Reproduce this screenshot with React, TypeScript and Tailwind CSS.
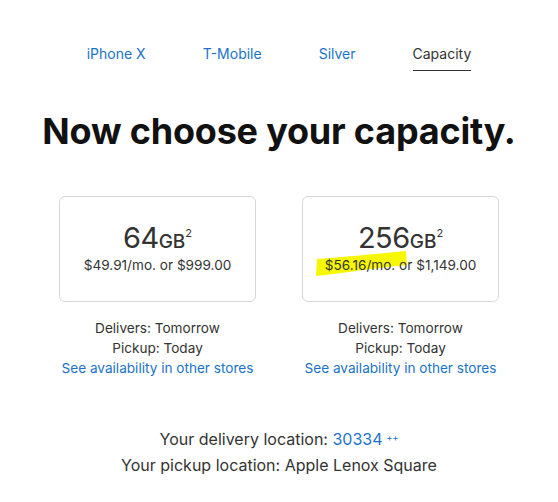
const NAV = [
  { label: "iPhone X", active: false },
  { label: "T-Mobile", active: false },
  { label: "Silver", active: false },
  { label: "Capacity", active: true },
];

function CapacityCard({
  size,
  monthly,
  full,
  marked,
}: {
  size: string;
  monthly: string;
  full: string;
  marked?: boolean;
}) {
  return (
    <div className="flex flex-col items-center">
      <div className="w-[197px] h-[106px] rounded-[6px] border border-[#d6d6d6] flex flex-col items-center pt-[26px]">
        <div className="flex items-baseline text-[#333] leading-none">
          <span className="text-[29px] tracking-[-0.5px]">{size}</span>
          <span className="text-[19px] font-medium">GB</span>
          <sup className="text-[11px] relative -top-[11px]">2</sup>
        </div>
        <div className="relative mt-[3px] text-[13.6px] text-[#333]">
          {marked && (
            <svg
              className="absolute left-[-9px] top-[-4px] w-[92px] h-[26px] pointer-events-none"
              viewBox="0 0 92 26"
            >
              <path
                d="M1 8 Q40 5 90 0 L91 14 Q60 17 40 20 Q18 23 0 25 Z"
                fill="#f7f700"
              />
            </svg>
          )}
          <span className="relative">
            {monthly} or {full}
          </span>
        </div>
      </div>
      <div className="mt-[16px] text-[13.6px] leading-[20px] text-[#333] text-center">
        <div>Delivers: Tomorrow</div>
        <div>Pickup: Today</div>
        <div className="text-[#1a73c8]">See availability in other stores</div>
      </div>
    </div>
  );
}

export default function App() {
  return (
    <div
      className="w-[558px] h-[502px] bg-white overflow-hidden"
      style={{ fontFamily: "Inter, 'Noto Sans', sans-serif" }}
    >
      {/* Step nav */}
      <div className="flex justify-center gap-[57px] pt-[43px] text-[14px]">
        {NAV.map((n) => (
          <div
            key={n.label}
            className={
              n.active
                ? "text-[#333] border-b border-[#333] pb-[6px]"
                : "text-[#1a73c8] pb-[6px]"
            }
          >
            {n.label}
          </div>
        ))}
      </div>

      <h1 className="mt-[42px] text-center text-[36px] font-bold tracking-[-0.2px] text-[#111] leading-none">
        Now choose your capacity.
      </h1>

      <div className="mt-[47px] flex justify-center gap-[46px]">
        <CapacityCard size="64" monthly="$49.91/mo." full="$999.00" />
        <CapacityCard size="256" monthly="$56.16/mo." full="$1,149.00" marked />
      </div>

      <div className="mt-[48px] text-center text-[16px] leading-[26px] text-[#333]">
        <div>
          Your delivery location: <span className="text-[#1a73c8]">30334</span>
          <sup className="text-[9px] text-[#1a73c8] ml-[4px]">++</sup>
        </div>
        <div>Your pickup location: Apple Lenox Square</div>
      </div>
    </div>
  );
}
